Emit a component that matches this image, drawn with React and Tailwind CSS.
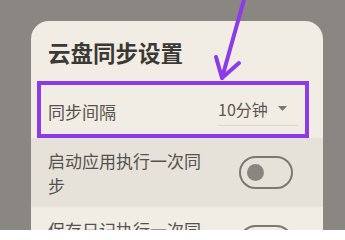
import React from "react";

const PURPLE = "#8d3ae9";

function Toggle() {
  return (
    <div className="flex h-[33px] w-[54px] shrink-0 items-center rounded-full border-2 border-[#7c7973] pl-[6px]">
      <div className="h-[17px] w-[17px] rounded-full bg-[#8a867f]" />
    </div>
  );
}

function SwitchRow({ label, shade }) {
  return (
    <div
      className={`flex h-[69px] items-center justify-between pl-[17px] pr-[30px] ${
        shade ? "bg-[#e6e2da]" : ""
      }`}
    >
      <div className="w-[160px] text-[17px] leading-[25px] text-[#55524d]">{label}</div>
      <Toggle />
    </div>
  );
}

export default function App() {
  return (
    <div
      className="relative h-[230px] w-full overflow-hidden bg-[#8a8783] pl-[31px] pt-[21px]"
      style={{ fontFamily: '"Noto Sans CJK SC", "Noto Sans", sans-serif' }}
    >
      <div className="w-[292px] rounded-[18px] bg-[#f1ede4] pb-6">
        {/* title */}
        <div className="px-[17px] pt-[16px] text-[22.5px] font-bold leading-[30px] text-[#3b3934]">
          云盘同步设置
        </div>

        {/* highlighted row */}
        <div className="ml-[6px] mr-[14px] mt-[14px] flex h-[57px] items-center justify-between border-4 border-[#8d3ae9] pl-[7px] pr-[7px] pt-[3px]">
          <span className="text-[17px] leading-[25px] text-[#55524d]">同步间隔</span>
          <div className="flex w-[80px] items-center border-b border-[#dcd8d0] pb-[3px]">
            <span className="text-[16px] leading-[25px] text-[#5a5752]">10分钟</span>
            <svg className="ml-[10px]" width="9" height="6" viewBox="0 0 9 6">
              <path d="M0 0 L9 0 L4.5 5 Z" fill="#7a7771" />
            </svg>
          </div>
        </div>

        <SwitchRow label="启动应用执行一次同步" shade />
        <SwitchRow label="保存日记执行一次同步" />
      </div>

      {/* annotation arrow */}
      <svg className="pointer-events-none absolute left-0 top-0" width="345" height="230" viewBox="0 0 345 230">
        <g stroke={PURPLE} strokeWidth="4" strokeLinecap="round" strokeLinejoin="round" fill="none">
          <path d="M245 -4 L222 78" />
          <path d="M216 57 L222 78 L239 63" />
        </g>
      </svg>
    </div>
  );
}
